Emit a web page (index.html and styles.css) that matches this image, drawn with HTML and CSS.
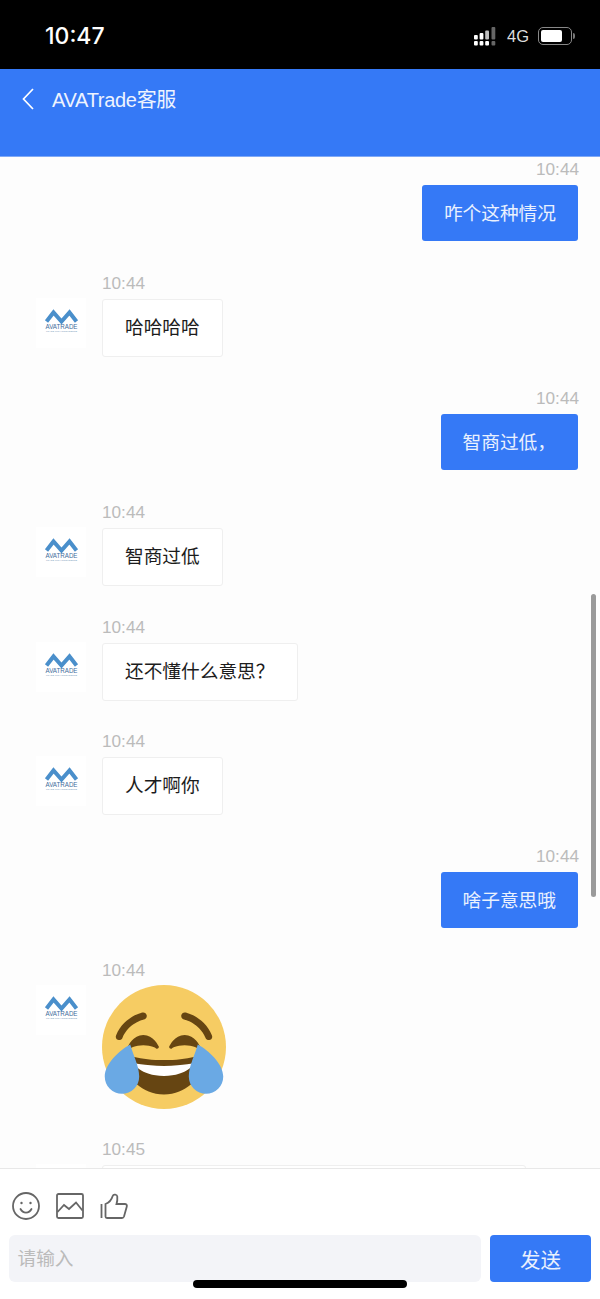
FILE: index.html
```html
<!DOCTYPE html>
<html lang="zh-CN">
<head>
    <meta charset="UTF-8">
    <meta name="viewport" content="width=device-width, initial-scale=1.0">
    <title>AVATrade客服</title>
    <link rel="stylesheet" href="styles.css">
</head>
<body>
    <div class="status-bar">
        <span class="clock">10:47</span>
        <div class="status-icons">
            <svg class="signal" width="24" height="19" viewBox="0 0 24 19">
                <rect x="0" y="8" width="3.8" height="4.6" rx="1" fill="#fff"/>
                <rect x="0" y="14" width="3.8" height="4.4" rx="1" fill="#fff"/>
                <rect x="5.6" y="6" width="3.8" height="6.6" rx="1" fill="#fff"/>
                <rect x="5.6" y="14" width="3.8" height="4.4" rx="1" fill="#fff"/>
                <rect x="11.2" y="3.5" width="3.8" height="9" rx="1" fill="#fff" opacity="0.75"/>
                <rect x="11.2" y="14" width="3.8" height="4.4" rx="1" fill="#fff"/>
                <rect x="17.5" y="0" width="3.8" height="12.6" rx="1" fill="#666"/>
                <rect x="17.5" y="14" width="3.8" height="4.4" rx="1" fill="#666"/>
            </svg>
            <span class="network">4G</span>
            <div class="battery"><div class="battery-level"></div></div>
            <div class="battery-nub"></div>
        </div>
    </div>

    <div class="header">
        <svg class="back" width="14" height="24" viewBox="0 0 14 24">
            <path d="M12 2 L2.5 12 L12 22" fill="none" stroke="#fff" stroke-width="1.7"/>
        </svg>
        <span class="header-title">AVATrade客服</span>
    </div>

    <div class="chat">
        <div class="msg msg-me">
            <div class="msg-time">10:44</div>
            <div class="bubble">咋个这种情况</div>
        </div>
        <div class="msg msg-agent">
            <div class="avatar">
                <svg viewBox="0 0 50 50">
                    <polyline class="logo-mark" points="10.5,23.500 17.500,14.500 25.500,23.500 33.500,14.500 40.500,23.500"/>
                    <text x="25.500" y="30.500" text-anchor="middle" class="logo-name" textLength="32" lengthAdjust="spacingAndGlyphs">AVATRADE</text>
                    <text x="25.500" y="34" text-anchor="middle" class="logo-tag" textLength="31" lengthAdjust="spacingAndGlyphs">TRADE WITH CONFIDENCE</text>
                </svg>
            </div>
            <div class="msg-body">
                <div class="msg-time">10:44</div>
                <div class="bubble">哈哈哈哈</div>
            </div>
        </div>
        <div class="msg msg-me">
            <div class="msg-time">10:44</div>
            <div class="bubble">智商过低，</div>
        </div>
        <div class="msg msg-agent">
            <div class="avatar">
                <svg viewBox="0 0 50 50">
                    <polyline class="logo-mark" points="10.5,23.500 17.500,14.500 25.500,23.500 33.500,14.500 40.500,23.500"/>
                    <text x="25.500" y="30.500" text-anchor="middle" class="logo-name" textLength="32" lengthAdjust="spacingAndGlyphs">AVATRADE</text>
                    <text x="25.500" y="34" text-anchor="middle" class="logo-tag" textLength="31" lengthAdjust="spacingAndGlyphs">TRADE WITH CONFIDENCE</text>
                </svg>
            </div>
            <div class="msg-body">
                <div class="msg-time">10:44</div>
                <div class="bubble">智商过低</div>
            </div>
        </div>
        <div class="msg msg-agent">
            <div class="avatar">
                <svg viewBox="0 0 50 50">
                    <polyline class="logo-mark" points="10.5,23.500 17.500,14.500 25.500,23.500 33.500,14.500 40.500,23.500"/>
                    <text x="25.500" y="30.500" text-anchor="middle" class="logo-name" textLength="32" lengthAdjust="spacingAndGlyphs">AVATRADE</text>
                    <text x="25.500" y="34" text-anchor="middle" class="logo-tag" textLength="31" lengthAdjust="spacingAndGlyphs">TRADE WITH CONFIDENCE</text>
                </svg>
            </div>
            <div class="msg-body">
                <div class="msg-time">10:44</div>
                <div class="bubble">还不懂什么意思？</div>
            </div>
        </div>
        <div class="msg msg-agent">
            <div class="avatar">
                <svg viewBox="0 0 50 50">
                    <polyline class="logo-mark" points="10.5,23.500 17.500,14.500 25.500,23.500 33.500,14.500 40.500,23.500"/>
                    <text x="25.500" y="30.500" text-anchor="middle" class="logo-name" textLength="32" lengthAdjust="spacingAndGlyphs">AVATRADE</text>
                    <text x="25.500" y="34" text-anchor="middle" class="logo-tag" textLength="31" lengthAdjust="spacingAndGlyphs">TRADE WITH CONFIDENCE</text>
                </svg>
            </div>
            <div class="msg-body">
                <div class="msg-time">10:44</div>
                <div class="bubble">人才啊你</div>
            </div>
        </div>
        <div class="msg msg-me">
            <div class="msg-time">10:44</div>
            <div class="bubble">啥子意思哦</div>
        </div>
        <div class="msg msg-agent msg-sticker">
            <div class="avatar">
                <svg viewBox="0 0 50 50">
                    <polyline class="logo-mark" points="10.5,23.500 17.500,14.500 25.500,23.500 33.500,14.500 40.500,23.500"/>
                    <text x="25.500" y="30.500" text-anchor="middle" class="logo-name" textLength="32" lengthAdjust="spacingAndGlyphs">AVATRADE</text>
                    <text x="25.500" y="34" text-anchor="middle" class="logo-tag" textLength="31" lengthAdjust="spacingAndGlyphs">TRADE WITH CONFIDENCE</text>
                </svg>
            </div>
            <div class="msg-body">
                <div class="msg-time">10:44</div>
                <svg class="emoji" width="124" height="124" viewBox="0 0 36 36">
                    <circle cx="18" cy="18" r="18" fill="#f6cc63"/>
                    <path fill="#664512" d="M28.457 17.797c-.06-.135-1.499-3.297-4.457-3.297-2.957 0-4.397 3.162-4.457 3.297-.092.207-.032.449.145.591.175.142.426.147.61.014.012-.009 1.262-.902 3.702-.902 2.426 0 3.674.881 3.702.901.088.066.194.099.298.099.11 0 .221-.037.312-.109.177-.142.238-.386.145-.594zm-12 0c-.06-.135-1.499-3.297-4.457-3.297-2.957 0-4.397 3.162-4.457 3.297-.092.207-.032.449.144.591.176.142.427.147.61.014.013-.009 1.262-.902 3.703-.902 2.426 0 3.674.881 3.702.901.088.066.194.099.298.099.11 0 .221-.037.312-.109.178-.142.237-.386.145-.594zM31 16c-.396 0-.772-.238-.929-.629-1.778-4.445-6.223-5.381-6.268-5.391-.541-.108-.893-.635-.784-1.177.108-.542.635-.891 1.177-.784.226.045 5.556 1.168 7.732 6.608.205.513-.045 1.095-.558 1.3-.12.05-.246.073-.37.073zM5 16c-.124 0-.25-.023-.371-.072-.513-.205-.762-.787-.557-1.3 2.176-5.44 7.506-6.563 7.732-6.608.543-.106 1.068.242 1.177.784.108.54-.242 1.066-.781 1.176-.185.038-4.506.98-6.271 5.391-.157.391-.533.629-.929.629z"/>
                    <path fill="#664512" d="M18 21.800c-3.623 0-6.027-.422-9-1-.679-.131-2 0-2 2 0 4 4.595 9 11 9 6.404 0 11-5 11-9 0-2-1.321-2.132-2-2-2.973.578-5.377 1-9 1z"/>
                    <path fill="#fff" d="M9 22.600s3 .9 9 .9 9-.9 9-.9-2 3.800-9 3.800-9-3.800-9-3.800z"/>
                    <path fill="#6aa9e4" d="M8.200 17.300C8.900 20 10.800 23.500 10.800 26.600A5 5 0 0 1 .8 26.600C.8 23 5 19 8.200 17.300Z"/>
                    <path fill="#6aa9e4" d="M27.800 17.300C27.100 20 25.200 23.500 25.200 26.600A5 5 0 0 0 35.200 26.600C35.200 23 31 19 27.800 17.300Z"/>
                </svg>
            </div>
        </div>
        <div class="msg msg-agent">
            <div class="avatar">
                <svg viewBox="0 0 50 50">
                    <polyline class="logo-mark" points="10.5,23.500 17.500,14.500 25.500,23.500 33.500,14.500 40.500,23.500"/>
                </svg>
            </div>
            <div class="msg-body">
                <div class="msg-time">10:45</div>
                <div class="bubble bubble-wide"></div>
            </div>
        </div>
        <div class="scrollbar"></div>
    </div>

    <div class="composer">
        <div class="tools">
            <svg width="30" height="30" viewBox="0 0 30 30" fill="none" stroke="#666" stroke-width="1.8">
                <circle cx="15" cy="15" r="13"/>
                <circle cx="10.5" cy="12" r="1.2" fill="#666" stroke="none"/>
                <circle cx="19.5" cy="12" r="1.2" fill="#666" stroke="none"/>
                <path d="M9.500 18c1.200 2.400 3.200 3.600 5.500 3.600s4.300-1.200 5.500-3.600" stroke-linecap="round"/>
            </svg>
            <svg width="30" height="30" viewBox="0 0 30 30" fill="none" stroke="#666" stroke-width="1.8">
                <rect x="2" y="3" width="26" height="24" rx="1.5"/>
                <path d="M2.500 21l6.500-7 5 4 7-6.500 6.500 8"/>
            </svg>
            <svg width="30" height="30" viewBox="0 0 30 30" fill="none" stroke="#666" stroke-width="1.8">
                <path d="M2.500 13v14"/>
                <path d="M6.500 13v12.500c0 .8.700 1.500 1.500 1.500h15c1 0 1.700-.6 2-1.500l2.800-10c.4-1.500-.500-2.500-2-2.500h-8.300c.8-2.500 1-5 .8-7.500-.2-2-3.800-2.800-4.600-.5-.9 3-3.200 6.500-7.200 8z"/>
            </svg>
        </div>
        <div class="input-row">
            <div class="input-box">请输入</div>
            <button class="send-btn">发送</button>
        </div>
        <div class="home-indicator"></div>
    </div>
</body>
</html>
```

FILE: styles.css
```css
* {
    box-sizing: border-box;
}
body {
    margin: 0;
    height: 1299px;
    overflow: hidden;
    display: flex;
    flex-direction: column;
    background-color: #fff;
    font-family: "Liberation Sans", "Noto Sans CJK SC", sans-serif;
}

/* status bar */
.status-bar {
    height: 69px;
    flex-shrink: 0;
    background-color: #000;
    color: #fff;
    display: flex;
    align-items: center;
    justify-content: space-between;
    padding: 3px 25px 0 45px;
}
.clock {
    font-family: Inter, sans-serif;
    font-size: 23px;
    font-weight: 500;
}
.status-icons {
    display: flex;
    align-items: center;
}
.network {
    font-size: 16.5px;
    color: #ddd;
    margin: 0 9px 0 8.5px;
}
.battery {
    width: 34px;
    height: 18px;
    border: 1.5px solid #888;
    border-radius: 5px;
    padding: 2px;
}
.battery-level {
    width: 21px;
    height: 100%;
    background-color: #fff;
    border-radius: 2px;
}
.battery-nub {
    width: 2px;
    height: 6px;
    margin-left: 1px;
    background-color: #777;
    border-radius: 0 2px 2px 0;
}

/* blue title bar */
.header {
    height: 88px;
    flex-shrink: 0;
    background-color: #3579f6;
    border-bottom: 1px solid #7fa9f6;
    color: #fff;
    display: flex;
    align-items: flex-start;
    padding: 18px 0 0 21px;
}
.back {
    margin-right: 17px;
}
.header-title {
    font-size: 20px;
    letter-spacing: -0.3px;
    line-height: 26px;
    color: #eef3fe;
}

/* message list */
.chat {
    flex: 1;
    min-height: 0;
    position: relative;
    overflow: hidden;
    background-color: #fdfdfd;
    padding: 0.5px 22px 0 36px;
}
.msg-time {
    height: 27px;
    padding-top: 1px;
    font-size: 17.2px;
    line-height: 20px;
    color: #bbb;
}
.msg-me {
    display: flex;
    flex-direction: column;
    align-items: flex-end;
    margin-bottom: 31.5px;
}
.msg-me .msg-time {
    margin-right: -1px;
}
.msg-agent {
    display: flex;
    align-items: flex-start;
    gap: 16px;
    margin-bottom: 29.5px;
}
.msg-sticker {
    margin-bottom: 29px;
}
.msg-body {
    display: flex;
    flex-direction: column;
    align-items: flex-start;
}
.avatar {
    width: 50px;
    height: 50px;
    margin-top: 26px;
    flex-shrink: 0;
    background-color: #fff;
}
.avatar svg {
    display: block;
    width: 50px;
    height: 50px;
}
.logo-mark {
    fill: none;
    stroke: #4a8fcb;
    stroke-width: 4;
}
.logo-name {
    font-size: 6.6px;
    fill: #3f6d9c;
}
.logo-tag {
    font-size: 2.4px;
    fill: #7b98b8;
}
.bubble {
    padding: 0 22px;
    height: 58px;
    line-height: 56px;
    font-size: 18.7px;
    color: #1c1c1c;
    background-color: #fff;
    border: 1px solid #efefef;
    border-radius: 3px;
}
.msg-me .bubble {
    height: 56px;
    line-height: 58px;
    border: none;
    color: #eaf1fe;
    background-color: #3579f6;
}
.bubble-wide {
    width: 424px;
}
.emoji {
    display: block;
    margin-top: -1px;
}
.scrollbar {
    position: absolute;
    right: 4px;
    top: 437px;
    width: 5px;
    height: 303px;
    border-radius: 3px;
    background-color: #9a9a9a;
}

/* input area */
.composer {
    height: 131px;
    flex-shrink: 0;
    position: relative;
    background-color: #fff;
    border-top: 1px solid #e8e8e8;
    padding: 22px 9px 0;
}
.tools {
    display: flex;
    align-items: center;
    gap: 14px;
    height: 30px;
    padding-left: 2px;
}
.input-row {
    display: flex;
    gap: 9px;
    margin-top: 14px;
}
.input-box {
    flex: 1;
    height: 47px;
    padding-left: 8.5px;
    line-height: 47px;
    font-size: 18.7px;
    color: #bbb;
    background-color: #f3f4f8;
    border-radius: 6px;
}
.send-btn {
    width: 101px;
    height: 47px;
    padding: 0;
    border: none;
    border-radius: 4px;
    font-family: inherit;
    font-size: 20.5px;
    color: #eaf1fe;
    background-color: #3579f6;
}
.home-indicator {
    position: absolute;
    left: 193px;
    top: 111px;
    width: 214px;
    height: 8px;
    border-radius: 4px;
    background-color: #000;
}
```
